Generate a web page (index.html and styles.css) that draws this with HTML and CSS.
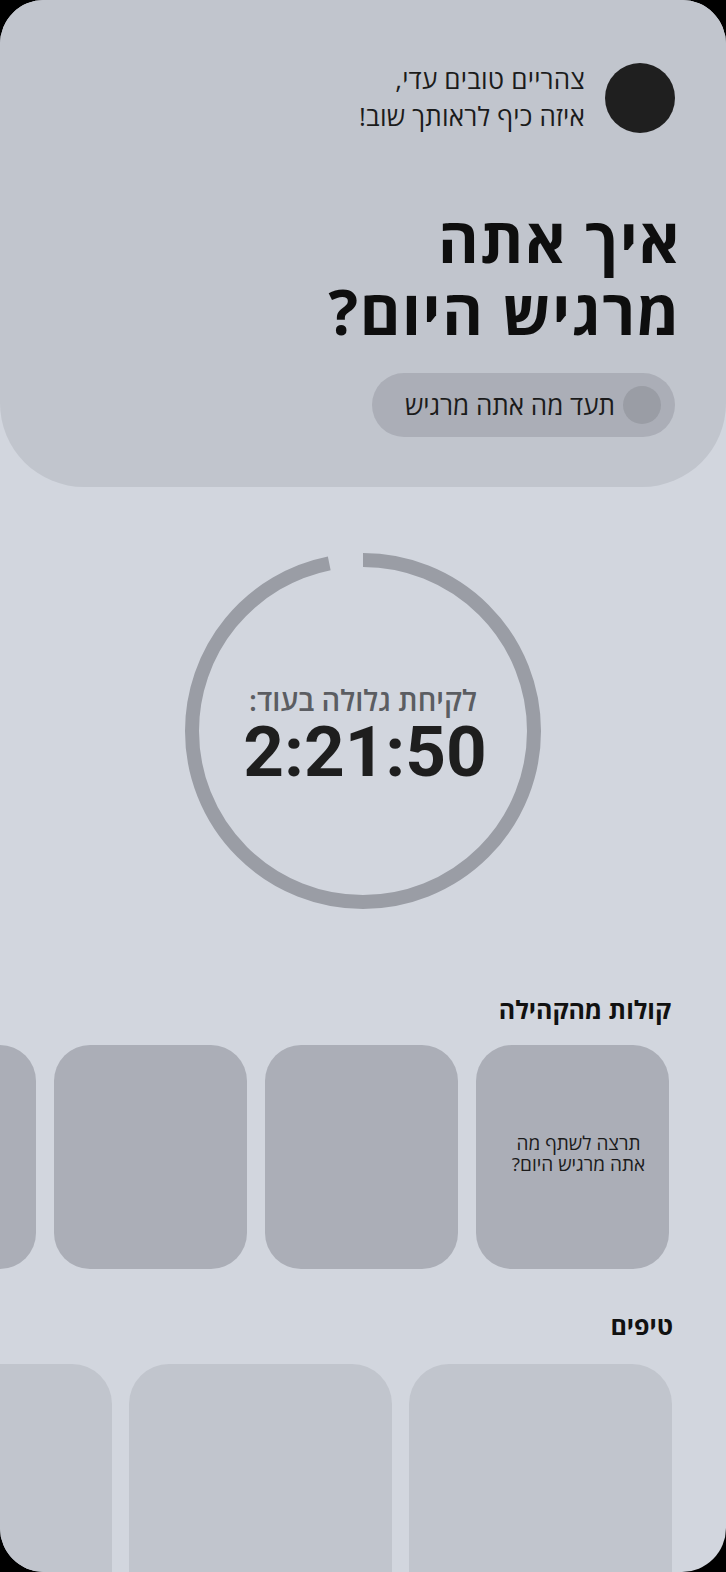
FILE: index.html
```html
<!DOCTYPE html>
<html lang="he" dir="rtl">
<head>
<meta charset="utf-8">
<title>Home</title>
<link rel="stylesheet" href="styles.css">
</head>
<body>
<div class="screen">
  <header class="hero">
    <div class="greet-row">
      <div class="avatar"></div>
      <p class="greet">צהריים טובים עדי,<br>איזה כיף לראותך שוב!</p>
    </div>
    <h1 class="title">איך אתה<br>מרגיש היום?</h1>
    <button class="pill">
      <span class="pill-dot"></span>
      <span class="pill-text">תעד מה אתה מרגיש</span>
    </button>
  </header>

  <section class="timer">
    <div class="ring">
      <svg class="ring-svg" width="356" height="356" viewBox="0 0 356 356">
        <circle cx="178" cy="178" r="171" fill="none" stroke="#9a9da5" stroke-width="14" stroke-dasharray="1040 1100" transform="rotate(-90 178 178)"/>
      </svg>
      <div class="ring-inner">
        <div class="ring-label">לקיחת גלולה בעוד:</div>
        <div class="ring-time" dir="ltr">2:21:50</div>
      </div>
    </div>
  </section>

  <section class="community">
    <h2 class="section-title">קולות מהקהילה</h2>
    <div class="row row-community">
      <div class="vcard"><p>תרצה לשתף מה<br>אתה מרגיש היום?</p></div>
      <div class="vcard"></div>
      <div class="vcard"></div>
      <div class="vcard"></div>
    </div>
  </section>

  <section class="tips">
    <h2 class="section-title">טיפים</h2>
    <div class="row row-tips">
      <div class="tcard"></div>
      <div class="tcard"></div>
      <div class="tcard"></div>
    </div>
  </section>
</div>
</body>
</html>
```

FILE: styles.css
```css
* { box-sizing: border-box; }
html, body { margin: 0; padding: 0; background: #000; }
body {
  font-family: "Open Sans", "DejaVu Sans", sans-serif;
  width: 726px;
  height: 1572px;
  overflow: hidden;
}
.screen {
  width: 726px;
  height: 1572px;
  background: #d2d6de;
  border-radius: 44px;
  overflow: hidden;
  direction: rtl;
}
.hero {
  background: #c1c5cd;
  height: 487px;
  border-radius: 0 0 84px 84px;
  padding: 63px 51px 0 51px;
  display: flex;
  flex-direction: column;
  align-items: flex-start;
}
.greet-row {
  display: flex;
  align-items: center;
  gap: 20px;
  height: 70px;
}
.avatar {
  width: 70px;
  height: 70px;
  border-radius: 50%;
  background: #1f1f1f;
  flex: none;
}
.greet {
  margin: 0;
  font-size: 26px;
  line-height: 37px;
  color: #1b1b1b;
  letter-spacing: 0.2px;
}
.title {
  margin: 70px -6px 0 0;
  font-size: 62px;
  line-height: 72px;
  font-weight: 700;
  color: #0e0e0e;
  letter-spacing: 1.6px;
}
.pill {
  margin-top: 26px;
  height: 64px;
  border: none;
  border-radius: 32px;
  background: #abaeb7;
  display: flex;
  align-items: center;
  gap: 8px;
  padding: 0 14px 0 33px;
  font-family: inherit;
}
.pill-dot {
  width: 38px;
  height: 38px;
  border-radius: 50%;
  background: #9a9da5;
  flex: none;
}
.pill-text {
  font-size: 26px;
  color: #1b1b1b;
  line-height: 32px;
}
.timer {
  display: flex;
  justify-content: center;
  padding-top: 66px;
}
.ring {
  position: relative;
  width: 356px;
  height: 356px;
}
.ring-svg { display: block; }
.ring-inner {
  position: absolute;
  inset: 0;
  display: flex;
  flex-direction: column;
  align-items: center;
  justify-content: center;
  padding-top: 8px;
}
.ring-label {
  font-size: 29px;
  line-height: 34px;
  font-weight: 600;
  color: #5b5d62;
}
.ring-time {
  font-family: Roboto, "Liberation Sans", sans-serif;
  font-size: 71px;
  line-height: 70px;
  font-weight: 700;
  color: #1e1e1e;
  margin-left: 4px;
}
.community { margin-top: 84px; }
.section-title {
  margin: 0;
  padding-right: 55px;
  font-size: 25px;
  line-height: 32px;
  font-weight: 700;
  color: #111;
}
.row {
  display: flex;
  overflow: hidden;
}
.row-community {
  margin-top: 20px;
  gap: 18px;
  padding-right: 57px;
}
.vcard {
  flex: none;
  width: 193px;
  height: 224px;
  border-radius: 36px;
  background: #abaeb7;
  display: flex;
  align-items: center;
  justify-content: center;
}
.vcard p {
  margin: 0 0 6px 12px;
  text-align: center;
  font-size: 19px;
  line-height: 21px;
  color: #1b1b1b;
}
.tips { margin-top: 40px; }
.tips .section-title { padding-right: 53px; }
.row-tips {
  margin-top: 23px;
  gap: 17px;
  padding-right: 54px;
}
.tcard {
  flex: none;
  width: 263px;
  height: 260px;
  border-radius: 40px 40px 0 0;
  background: #c1c5cd;
}
```
